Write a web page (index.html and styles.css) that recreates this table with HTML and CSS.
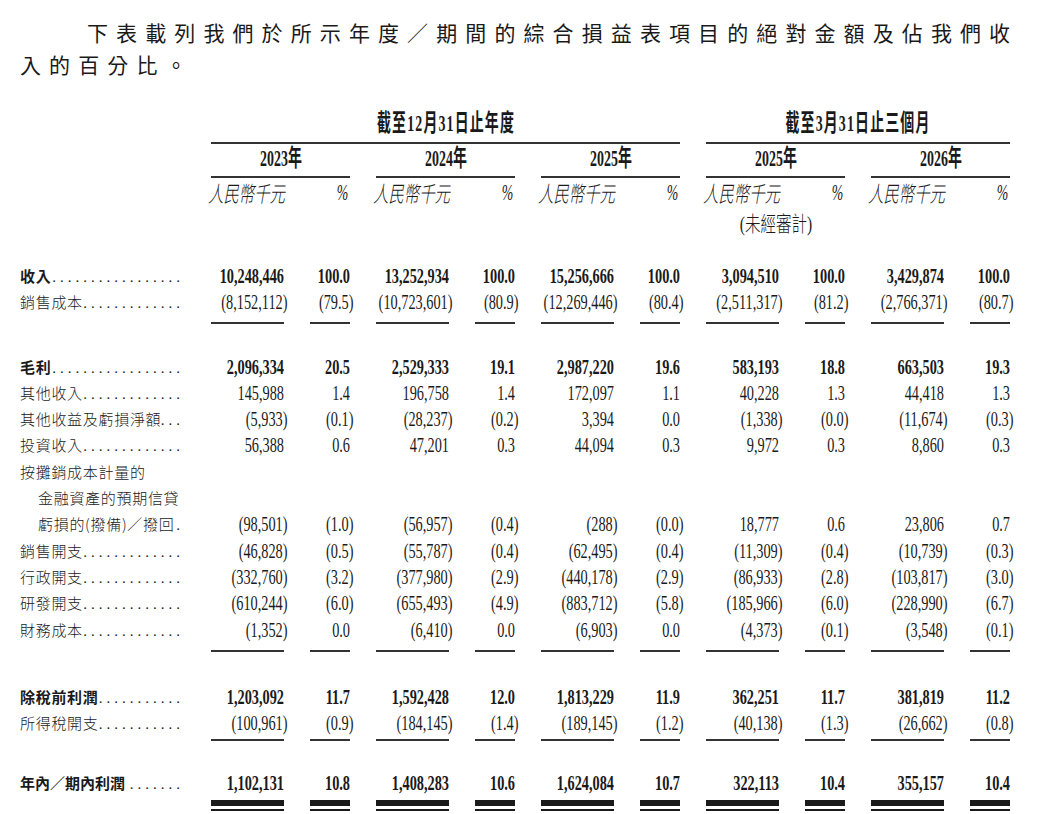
FILE: index.html
```html
<!DOCTYPE html>
<html lang="zh-Hant">
<head>
<meta charset="utf-8">
<title>綜合損益表</title>
<link rel="stylesheet" href="styles.css">
</head>
<body>
<p class="intro">下表載列我們於所示年度／期間的綜合損益表項目的絕對金額及佔我們收<br>入的百分比。</p>

<div class="head">
  <div class="g h1">
    <div></div>
    <div class="t t1"><span class="sq">截至12月31日止年度</span></div>
    <div class="t t2"><span class="sq">截至3月31日止三個月</span></div>
  </div>
  <div class="g h2">
    <div></div>
    <div class="y y1"><span class="sq">2023年</span></div>
    <div class="y y2"><span class="sq">2024年</span></div>
    <div class="y y3"><span class="sq">2025年</span></div>
    <div class="y y4"><span class="sq">2025年</span></div>
    <div class="y y5"><span class="sq">2026年</span></div>
  </div>
  <div class="g h3">
    <div></div>
    <div class="u"><span>人民幣千元</span></div><div class="p"><span>%</span></div>
    <div class="u"><span>人民幣千元</span></div><div class="p"><span>%</span></div>
    <div class="u"><span>人民幣千元</span></div><div class="p"><span>%</span></div>
    <div class="u"><span>人民幣千元</span></div><div class="p"><span>%</span></div>
    <div class="u"><span>人民幣千元</span></div><div class="p"><span>%</span></div>
  </div>
  <div class="g h4">
    <div class="ua"><span>(未經審計)</span></div>
  </div>
</div>

<section class="sec sa">
  <div class="g row b">
    <div class="l">收入</div>
    <div class="n">10,248,446</div><div class="n">100.0</div>
    <div class="n">13,252,934</div><div class="n">100.0</div>
    <div class="n">15,256,666</div><div class="n">100.0</div>
    <div class="n">3,094,510</div><div class="n">100.0</div>
    <div class="n">3,429,874</div><div class="n">100.0</div>
  </div>
  <div class="g row">
    <div class="l">銷售成本</div>
    <div class="n ng">(8,152,112)</div><div class="n ng">(79.5)</div>
    <div class="n ng">(10,723,601)</div><div class="n ng">(80.9)</div>
    <div class="n ng">(12,269,446)</div><div class="n ng">(80.4)</div>
    <div class="n ng">(2,511,317)</div><div class="n ng">(81.2)</div>
    <div class="n ng">(2,766,371)</div><div class="n ng">(80.7)</div>
  </div>
  <div class="g rule r1"><i></i><i></i><i></i><i></i><i></i><i></i><i></i><i></i><i></i><i></i><i></i></div>
</section>

<section class="sec sb">
  <div class="g row b">
    <div class="l">毛利</div>
    <div class="n">2,096,334</div><div class="n">20.5</div>
    <div class="n">2,529,333</div><div class="n">19.1</div>
    <div class="n">2,987,220</div><div class="n">19.6</div>
    <div class="n">583,193</div><div class="n">18.8</div>
    <div class="n">663,503</div><div class="n">19.3</div>
  </div>
  <div class="g row">
    <div class="l">其他收入</div>
    <div class="n">145,988</div><div class="n">1.4</div>
    <div class="n">196,758</div><div class="n">1.4</div>
    <div class="n">172,097</div><div class="n">1.1</div>
    <div class="n">40,228</div><div class="n">1.3</div>
    <div class="n">44,418</div><div class="n">1.3</div>
  </div>
  <div class="g row">
    <div class="l">其他收益及虧損淨額</div>
    <div class="n ng">(5,933)</div><div class="n ng">(0.1)</div>
    <div class="n ng">(28,237)</div><div class="n ng">(0.2)</div>
    <div class="n">3,394</div><div class="n">0.0</div>
    <div class="n ng">(1,338)</div><div class="n ng">(0.0)</div>
    <div class="n ng">(11,674)</div><div class="n ng">(0.3)</div>
  </div>
  <div class="g row">
    <div class="l">投資收入</div>
    <div class="n">56,388</div><div class="n">0.6</div>
    <div class="n">47,201</div><div class="n">0.3</div>
    <div class="n">44,094</div><div class="n">0.3</div>
    <div class="n">9,972</div><div class="n">0.3</div>
    <div class="n">8,860</div><div class="n">0.3</div>
  </div>
  <div class="g row">
    <div class="l nod">按攤銷成本計量的</div>
  </div>
  <div class="g row">
    <div class="l nod ind">金融資產的預期信貸</div>
  </div>
  <div class="g row">
    <div class="l ind">虧損的(撥備)／撥回</div>
    <div class="n ng">(98,501)</div><div class="n ng">(1.0)</div>
    <div class="n ng">(56,957)</div><div class="n ng">(0.4)</div>
    <div class="n ng">(288)</div><div class="n ng">(0.0)</div>
    <div class="n">18,777</div><div class="n">0.6</div>
    <div class="n">23,806</div><div class="n">0.7</div>
  </div>
  <div class="g row">
    <div class="l">銷售開支</div>
    <div class="n ng">(46,828)</div><div class="n ng">(0.5)</div>
    <div class="n ng">(55,787)</div><div class="n ng">(0.4)</div>
    <div class="n ng">(62,495)</div><div class="n ng">(0.4)</div>
    <div class="n ng">(11,309)</div><div class="n ng">(0.4)</div>
    <div class="n ng">(10,739)</div><div class="n ng">(0.3)</div>
  </div>
  <div class="g row">
    <div class="l">行政開支</div>
    <div class="n ng">(332,760)</div><div class="n ng">(3.2)</div>
    <div class="n ng">(377,980)</div><div class="n ng">(2.9)</div>
    <div class="n ng">(440,178)</div><div class="n ng">(2.9)</div>
    <div class="n ng">(86,933)</div><div class="n ng">(2.8)</div>
    <div class="n ng">(103,817)</div><div class="n ng">(3.0)</div>
  </div>
  <div class="g row">
    <div class="l">研發開支</div>
    <div class="n ng">(610,244)</div><div class="n ng">(6.0)</div>
    <div class="n ng">(655,493)</div><div class="n ng">(4.9)</div>
    <div class="n ng">(883,712)</div><div class="n ng">(5.8)</div>
    <div class="n ng">(185,966)</div><div class="n ng">(6.0)</div>
    <div class="n ng">(228,990)</div><div class="n ng">(6.7)</div>
  </div>
  <div class="g row">
    <div class="l">財務成本</div>
    <div class="n ng">(1,352)</div><div class="n">0.0</div>
    <div class="n ng">(6,410)</div><div class="n">0.0</div>
    <div class="n ng">(6,903)</div><div class="n">0.0</div>
    <div class="n ng">(4,373)</div><div class="n ng">(0.1)</div>
    <div class="n ng">(3,548)</div><div class="n ng">(0.1)</div>
  </div>
  <div class="g rule r2"><i></i><i></i><i></i><i></i><i></i><i></i><i></i><i></i><i></i><i></i><i></i></div>
</section>

<section class="sec sc">
  <div class="g row b">
    <div class="l">除稅前利潤</div>
    <div class="n">1,203,092</div><div class="n">11.7</div>
    <div class="n">1,592,428</div><div class="n">12.0</div>
    <div class="n">1,813,229</div><div class="n">11.9</div>
    <div class="n">362,251</div><div class="n">11.7</div>
    <div class="n">381,819</div><div class="n">11.2</div>
  </div>
  <div class="g row">
    <div class="l">所得稅開支</div>
    <div class="n ng">(100,961)</div><div class="n ng">(0.9)</div>
    <div class="n ng">(184,145)</div><div class="n ng">(1.4)</div>
    <div class="n ng">(189,145)</div><div class="n ng">(1.2)</div>
    <div class="n ng">(40,138)</div><div class="n ng">(1.3)</div>
    <div class="n ng">(26,662)</div><div class="n ng">(0.8)</div>
  </div>
  <div class="g rule r3"><i></i><i></i><i></i><i></i><i></i><i></i><i></i><i></i><i></i><i></i><i></i></div>
</section>

<section class="sec sd">
  <div class="g row b">
    <div class="l sp">年內／期內利潤</div>
    <div class="n">1,102,131</div><div class="n">10.8</div>
    <div class="n">1,408,283</div><div class="n">10.6</div>
    <div class="n">1,624,084</div><div class="n">10.7</div>
    <div class="n">322,113</div><div class="n">10.4</div>
    <div class="n">355,157</div><div class="n">10.4</div>
  </div>
  <div class="g rule dbl"><i></i><i></i><i></i><i></i><i></i><i></i><i></i><i></i><i></i><i></i><i></i></div>
</section>
</body>
</html>
```

FILE: styles.css
```css
* { box-sizing: border-box; }

html, body { background: #ffffff; }

body {
  margin: 0;
  padding: 0 20px;
  color: #1a1a1a;
  font-family: "Liberation Serif", "Noto Sans CJK TC", serif;
  overflow: hidden;
}

.intro {
  margin: 0;
  padding-top: 16px;
  font-family: "Noto Sans CJK TC", sans-serif;
  font-weight: 400;
  font-size: 21px;
  line-height: 32px;
  letter-spacing: 8.1px;
  text-indent: 67px;
  white-space: nowrap;
}

.g {
  display: grid;
  grid-template-columns: 165px repeat(5, 73px 40px);
  column-gap: 26px;
}

/* ---------- header ---------- */
.head { margin-top: 28px; }

.sq {
  display: inline-block;
  vertical-align: top;
  font-family: "Liberation Serif", "Noto Sans CJK TC", serif;
  font-weight: 700;
  font-size: 24px;
  transform: scaleX(0.58);
  transform-origin: center;
  white-space: nowrap;
}

.t {
  height: 36px;
  text-align: center;
  line-height: 30px;
  padding-bottom: 4px;
  border-bottom: 2px solid #333;
}
.t .sq { letter-spacing: 2px; line-height: 30px; }
.t1 { grid-column: 2 / 8; }
.t2 { grid-column: 8 / 12; }

.y {
  height: 34px;
  text-align: center;
  line-height: 28px;
  padding-bottom: 4px;
  border-bottom: 2px solid #333;
}
.y .sq { line-height: 28px; }
.y1 { grid-column: 2 / 4; }
.y2 { grid-column: 4 / 6; }
.y3 { grid-column: 6 / 8; }
.y4 { grid-column: 8 / 10; }
.y5 { grid-column: 10 / 12; }

.h3 { height: 29px; padding-top: 1px; }
.h3 > div { height: 27px; line-height: 27px; }

.u span {
  display: inline-block;
  vertical-align: top;
  line-height: 27px;
  margin-left: -3px;
  font-family: "Noto Sans CJK TC", sans-serif;
  font-weight: 300;
  font-style: italic;
  font-size: 22px;
  transform: scaleX(0.7);
  transform-origin: left center;
  white-space: nowrap;
}

.p { text-align: right; }
.p span {
  display: inline-block;
  vertical-align: top;
  line-height: 27px;
  margin-right: 2px;
  font-family: "Liberation Serif", serif;
  font-style: italic;
  font-size: 23px;
  transform: scaleX(0.6);
  transform-origin: right center;
}

.h4 { height: 31px; padding-top: 4px; }
.ua {
  grid-column: 8 / 10;
  height: 27px;
  line-height: 27px;
  text-align: center;
}
.ua span {
  display: inline-block;
  vertical-align: top;
  line-height: 27px;
  font-family: "Liberation Serif", "Noto Sans CJK TC", serif;
  font-weight: 300;
  font-size: 21px;
  transform: scaleX(0.74);
  transform-origin: center;
  white-space: nowrap;
}

/* ---------- body rows ---------- */
.sa { margin-top: 25px; }
.sb { margin-top: 30px; }
.sc { margin-top: 32px; }
.sd { margin-top: 29px; }

.row {
  height: 26.3px;
  line-height: 26.3px;
}

.l {
  display: flex;
  align-items: baseline;
  padding-right: 1px;
  font-family: "Noto Sans CJK TC", sans-serif;
  font-weight: 300;
  font-size: 15px;
  letter-spacing: 0.7px;
  white-space: nowrap;
}
.l::after {
  content: "....................................";
  flex: 1;
  min-width: 0;
  overflow: hidden;
  direction: rtl;
  font-family: "Liberation Serif", serif;
  font-weight: 400;
  font-size: 15px;
  letter-spacing: 4px;
}
.l.sp { letter-spacing: 0; }
.l.sp::after { padding-left: 6px; }
.l.nod::after { display: none; }
.l.ind { padding-left: 18px; }
.b .l { font-weight: 700; }

.n {
  display: flex;
  justify-content: flex-end;
  font-family: "Liberation Serif", serif;
  font-size: 22px;
  transform: scaleX(0.65);
  transform-origin: right center;
  white-space: nowrap;
}
.ng { margin-right: -3.5px; }
.b .n { font-weight: 700; }

/* ---------- rules ---------- */
.rule i {
  display: block;
  height: 2px;
  background: #333;
}
.rule i:first-child { background: transparent; }

.r1 { margin-top: 6px; }
.r2 { margin-top: 7px; }
.r3 { margin-top: 3px; }

.dbl { margin-top: 3px; }
.dbl i {
  height: 11px;
  background: transparent;
  border-top: 6px solid #1a1a1a;
  border-bottom: 2px solid #1a1a1a;
}
.dbl i:first-child { border: 0; }
```
